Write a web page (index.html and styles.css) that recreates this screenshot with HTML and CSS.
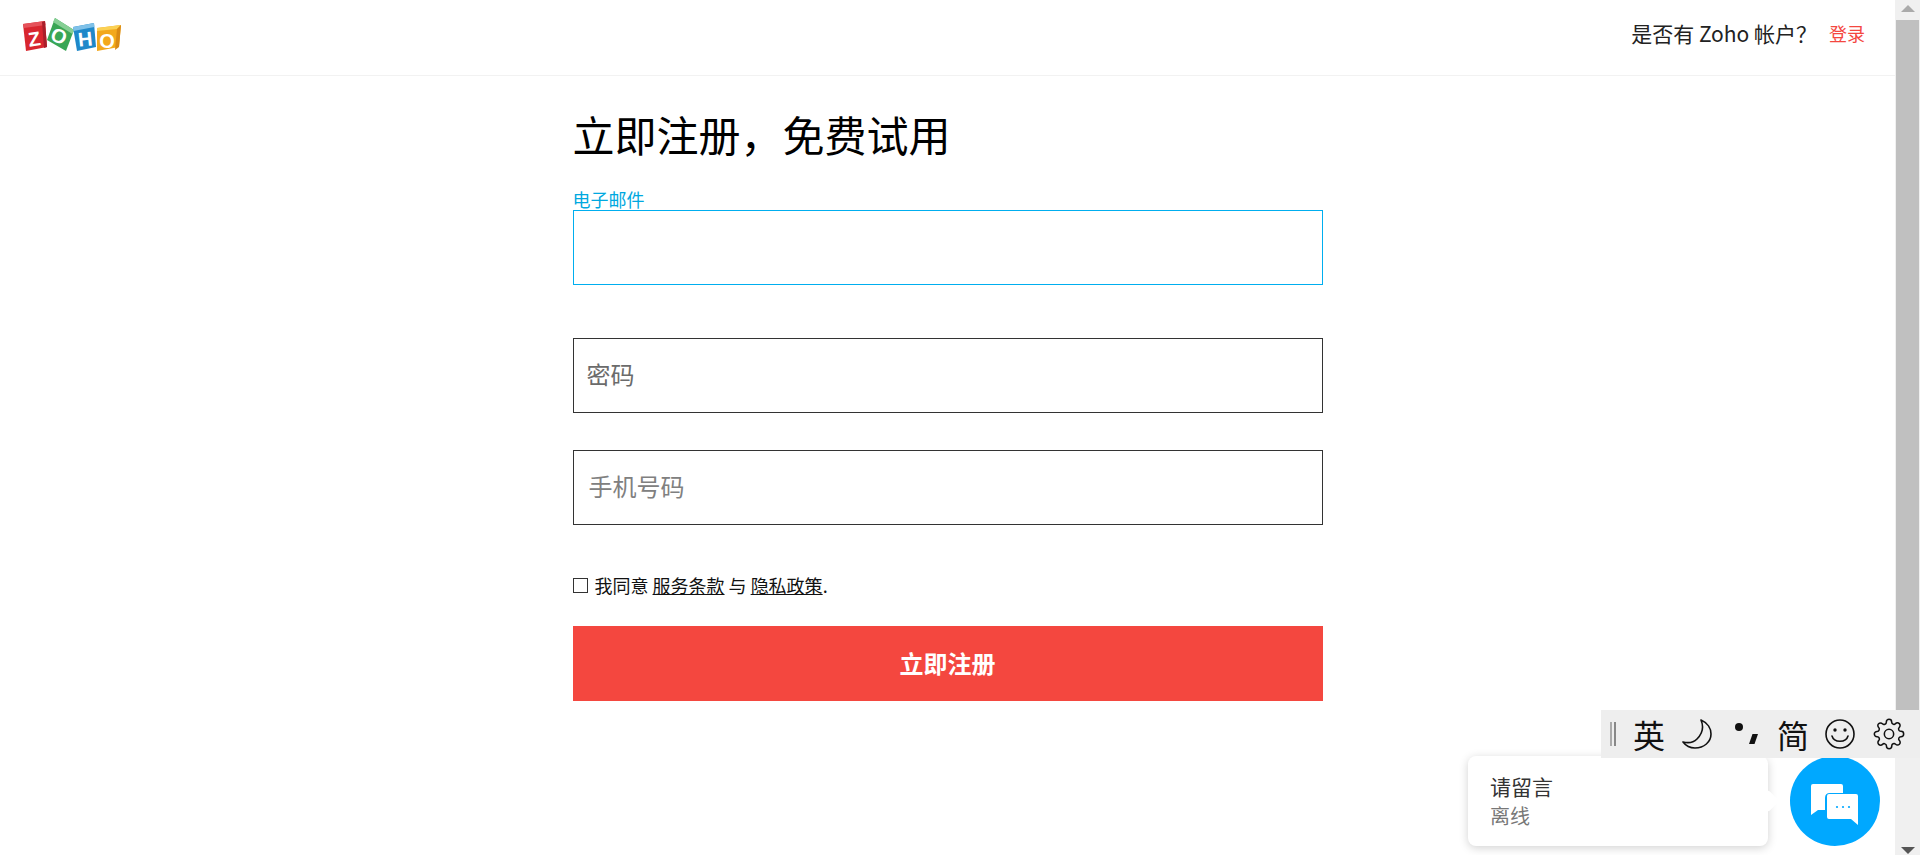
FILE: index.html
```html
<!DOCTYPE html>
<html lang="zh-CN">
<head>
<meta charset="utf-8">
<title>Zoho 注册</title>
<link rel="stylesheet" href="styles.css">
</head>
<body>
<div class="page">
  <div class="main">
    <header class="topbar">
      <svg class="logo" width="104" height="40" viewBox="0 0 104 40" aria-label="Zoho">
        <polygon points="3,9 25,6 27,32 6,36" fill="#d8262f"/>
        <polygon points="3,9 25,6 25.500,10 4,13" fill="#e5525a"/>
        <polygon points="22,7 25,6 27,32 24,33" fill="#a81f2a"/>
        <text class="logo-letter" x="14" y="31" transform="rotate(-8 14 22)">Z</text>
        <polygon points="35,3 54,15 46,36 27,25" fill="#3aa655"/>
        <polygon points="35,3 54,15 52.500,19 33,7" fill="#86cf94"/>
        <text class="logo-letter" x="39" y="28" transform="rotate(24 39 21)">O</text>
        <polygon points="53,12 74,8 76,32 57,36" fill="#1f88c9"/>
        <polygon points="53,12 74,8 74.300,12 53.500,16" fill="#7fc1e8"/>
        <text class="logo-letter" x="65" y="31" transform="rotate(-6 65 23)">H</text>
        <polygon points="77,13 101,10 99,32 77,36" fill="#f3a81c"/>
        <polygon points="77,13 101,10 97,14 77,16" fill="#fbd154"/>
        <polygon points="97,14 101,10 99,32 95,35" fill="#d98a14"/>
        <text class="logo-letter" x="87" y="33">O</text>
      </svg>
      <div class="account">
        <span class="account-q">是否有 Zoho 帐户？</span>
        <a class="account-login">登录</a>
      </div>
    </header>
    <main class="form">
      <h1 class="title">立即注册，免费试用</h1>
      <div class="field-email">
        <div class="label">电子邮件</div>
        <div class="box box-focus"></div>
      </div>
      <div class="box box-password"><span class="ph">密码</span></div>
      <div class="box box-phone"><span class="ph ph-phone">手机号码</span></div>
      <div class="agree">
        <span class="check"></span>
        <span>我同意 <u>服务条款</u> 与 <u>隐私政策</u>.</span>
      </div>
      <button class="submit">立即注册</button>
    </main>
  </div>
  <div class="scrollbar">
    <div class="arrow arrow-up"></div>
    <div class="thumb"></div>
    <div class="arrow arrow-down"></div>
  </div>
</div>

<div class="ime">
  <span class="ime-grip"></span>
  <span class="ime-char">英</span>
  <svg class="ime-icon" width="32" height="32" viewBox="0 0 32 32"><path d="M19 2 C26 5 29 11 29 16 C29 24 22 30 13 30 C8 30 4 28 1 24 C5 25 11 25 15 21 C20 16 22 9 19 2 Z" fill="none" stroke="#111" stroke-width="1.600" stroke-linejoin="round"/></svg>
  <svg class="ime-icon" width="32" height="32" viewBox="0 0 32 32"><circle cx="8" cy="9" r="4" fill="#111"/><path d="M21.500 16 H27 L23.500 26 H18 Z" fill="#111"/></svg>
  <span class="ime-char ime-char-simple">简</span>
  <svg class="ime-icon ime-icon-tight" width="32" height="32" viewBox="0 0 32 32"><circle cx="16" cy="16" r="14" fill="none" stroke="#111" stroke-width="1.600"/><circle cx="11" cy="12" r="1.700" fill="#111"/><circle cx="21" cy="12" r="1.700" fill="#111"/><path d="M8 18 C10 25 22 25 24 18" fill="none" stroke="#111" stroke-width="1.600" stroke-linecap="round"/></svg>
  <svg class="ime-icon" width="32" height="32" viewBox="0 0 24 24"><circle cx="12" cy="12" r="3.500" fill="none" stroke="#111" stroke-width="1.150"/><path d="M19.400 15a1.650 1.650 0 0 0 .33 1.820l.06.06a2 2 0 0 1 0 2.830 2 2 0 0 1-2.830 0l-.06-.06a1.650 1.650 0 0 0-1.820-.33 1.650 1.650 0 0 0-1 1.510V21a2 2 0 0 1-2 2 2 2 0 0 1-2-2v-.09A1.650 1.650 0 0 0 9 19.400a1.650 1.650 0 0 0-1.820.33l-.06.06a2 2 0 0 1-2.830 0 2 2 0 0 1 0-2.830l.06-.06a1.650 1.650 0 0 0 .33-1.820 1.650 1.650 0 0 0-1.510-1H3a2 2 0 0 1-2-2 2 2 0 0 1 2-2h.09A1.650 1.650 0 0 0 4.600 9a1.650 1.650 0 0 0-.33-1.820l-.06-.06a2 2 0 0 1 0-2.830 2 2 0 0 1 2.830 0l.06.06a1.650 1.650 0 0 0 1.820.33H9a1.650 1.650 0 0 0 1-1.510V3a2 2 0 0 1 2-2 2 2 0 0 1 2 2v.09a1.650 1.650 0 0 0 1 1.510 1.650 1.650 0 0 0 1.820-.33l.06-.06a2 2 0 0 1 2.830 0 2 2 0 0 1 0 2.830l-.06.06a1.650 1.650 0 0 0-.33 1.820V9a1.650 1.650 0 0 0 1.510 1H21a2 2 0 0 1 2 2 2 2 0 0 1-2 2h-.09a1.650 1.650 0 0 0-1.510 1z" fill="none" stroke="#111" stroke-width="1.150" stroke-linejoin="round"/></svg>
</div>

<aside class="chat">
  <div class="chat-card">
    <div class="chat-title">请留言</div>
    <div class="chat-status">离线</div>
    <span class="chat-tip"></span>
  </div>
  <div class="chat-btn">
    <svg class="chat-icon" width="48" height="42" viewBox="0 0 48 42"><path d="M2 0 H30 Q32 0 32 2 V9 H19 Q14 9 14 14 V26 H7 L0 31 V2 Q0 0 2 0 Z" fill="#fff"/><path d="M18 10 H45 Q47 10 47 12 V41 L40 35 H18 Q16 35 16 33 V12 Q16 10 18 10 Z" fill="#fff"/><circle cx="26" cy="23" r="1.100" fill="#00a8ff"/><circle cx="32" cy="23" r="1.100" fill="#00a8ff"/><circle cx="38" cy="23" r="1.100" fill="#00a8ff"/></svg>
  </div>
</aside>
</body>
</html>
```
FILE: styles.css
```css
* { box-sizing: border-box; }
html, body { margin: 0; height: 100%; overflow: hidden; background: #fff; }
body { font-family: "Noto Sans CJK SC", "Liberation Sans", sans-serif; color: #000; }
.page { display: flex; height: 855px; }
.main { flex: 1; min-width: 0; }
.topbar { height: 76px; border-bottom: 1px solid #f2f2f2; display: flex; align-items: flex-start; justify-content: space-between; padding: 15px 30px 0 20px; }
.logo { display: block; }
.logo-letter { font: bold 20px "Liberation Sans", sans-serif; fill: #fff; text-anchor: middle; }
.account { display: flex; align-items: center; gap: 12px; margin-top: 3px; height: 30px; }
.account-q { font-size: 21px; color: #222; word-spacing: 0; }
.account-login { font-size: 18px; color: #f4473f; }
.form { width: 750px; margin: 0 auto; }
.title { font-size: 42px; font-weight: 400; line-height: 60px; margin: 28px 0 0; height: 86px; color: #000; }
.field-email { height: 148px; }
.label { font-size: 18px; line-height: 18px; height: 20px; color: #00a8e0; }
.box { height: 75px; border: 1px solid #333; display: flex; align-items: center; padding: 0 0 4px 13px; }
.box-focus { border-color: #00aeef; }
.box-password { margin-bottom: 37px; }
.box-phone { margin-bottom: 50px; }
.ph { font-size: 24px; color: #6b6b6b; }
.ph-phone { margin-left: 2px; color: #808080; }
.agree { display: flex; align-items: center; gap: 7px; font-size: 18px; line-height: 20px; height: 20px; color: #111; }
.check { width: 15px; height: 15px; border: 1px solid #333; }
.submit { display: block; width: 750px; height: 75px; margin-top: 31px; padding: 0 0 2px; border: 0; background: #f4473f; color: #fff; font: bold 24px "Noto Sans CJK SC", sans-serif; }
.scrollbar { width: 25px; background: #f0f0f0; display: flex; flex-direction: column; align-items: center; }
.arrow { flex: none; width: 0; height: 0; border-left: 7px solid transparent; border-right: 7px solid transparent; }
.arrow-up { margin-top: 5px; border-bottom: 7px solid #aaa; }
.thumb { flex: none; width: 23px; height: 718px; margin: 8px 0 0; background: #c0c0c0; }
.arrow-down { margin-top: 109px; border-top: 7px solid #555; }
.ime { position: absolute; left: 1601px; top: 710px; width: 319px; height: 48px; background: #eeeeee; display: flex; align-items: center; padding-left: 9px; z-index: 2; }
.ime-grip { width: 6px; height: 24px; border-left: 2px solid #aaa; border-right: 2px solid #888; margin-right: 17px; }
.ime-char { font-size: 32px; line-height: 32px; width: 32px; color: #111; }
.ime-icon { display: block; margin-left: 17px; }
.ime-char-simple { margin-left: 14px; }
.ime-icon-tight { margin-left: 15px; }
.chat { position: absolute; left: 1468px; top: 756px; display: flex; align-items: center; z-index: 1; }
.chat-card { position: relative; width: 300px; height: 90px; background: #fff; border-radius: 8px; box-shadow: 0 2px 10px rgba(0,0,0,.18); padding: 15px 22px; }
.chat-title { font-size: 21px; line-height: 30px; color: #333; }
.chat-status { font-size: 20px; line-height: 30px; color: #777; }
.chat-tip { position: absolute; right: -8px; top: 37px; width: 16px; height: 16px; background: #fff; transform: rotate(45deg); border-radius: 3px; }
.chat-btn { width: 90px; height: 90px; margin-left: 22px; border-radius: 50%; background: #00a8ff; display: flex; align-items: center; justify-content: center; }
.chat-icon { display: block; margin-top: 8px; }
```
